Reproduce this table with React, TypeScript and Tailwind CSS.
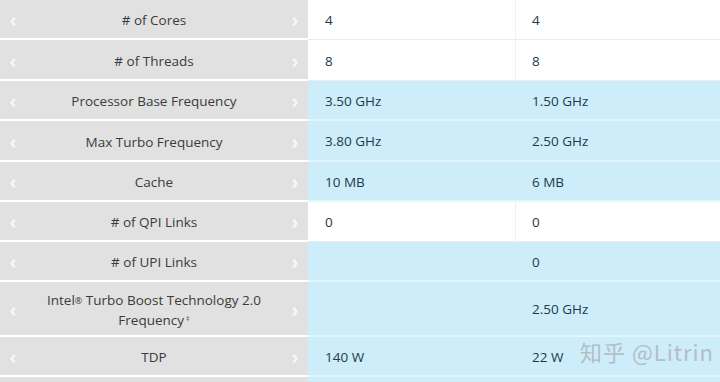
import React from "react";

type Row = { label: React.ReactNode; a: string; b: string; blue: boolean; h: number; arrows?: boolean };

const rows: Row[] = [
  { label: "# of Cores", a: "4", b: "4", blue: false, h: 40 },
  { label: "# of Threads", a: "8", b: "8", blue: false, h: 41 },
  { label: "Processor Base Frequency", a: "3.50 GHz", b: "1.50 GHz", blue: true, h: 40 },
  { label: "Max Turbo Frequency", a: "3.80 GHz", b: "2.50 GHz", blue: true, h: 41 },
  { label: "Cache", a: "10 MB", b: "6 MB", blue: true, h: 40 },
  { label: "# of QPI Links", a: "0", b: "0", blue: false, h: 40 },
  { label: "# of UPI Links", a: "", b: "0", blue: true, h: 40 },
  {
    label: (
      <>
        Intel<sup className="text-[9px] relative -top-[1px]">®</sup> Turbo Boost Technology 2.0
        <br />
        Frequency<sup className="text-[7px] relative -top-[4px] ml-[2px]">‡</sup>
      </>
    ),
    a: "",
    b: "2.50 GHz",
    blue: true,
    h: 55,
  },
  { label: "TDP", a: "140 W", b: "22 W", blue: true, h: 40 },
  { label: "", a: "", b: "", blue: true, h: 20, arrows: false },
];

export default function App() {
  return (
    <div
      className="relative w-[720px] h-[382px] overflow-hidden bg-white"
      style={{ fontFamily: '"Open Sans", "Noto Sans", sans-serif' }}
    >
      <div className="flex flex-col">
        {rows.map((r, i) => (
          <div key={i} className="flex" style={{ height: r.h }}>
            <div className="w-[308px] flex items-center bg-[#e1e1e1] border-b-2 border-white text-[#3b3b3b] text-[13.5px] leading-[20.5px] pt-[3px]">
              <span className="w-[26px] text-center text-[#f7f7f7] text-[19px] font-bold">
                {r.arrows === false ? "" : "‹"}
              </span>
              <span className="flex-1 text-center">{r.label}</span>
              <span className="w-[26px] text-center text-[#f7f7f7] text-[19px] font-bold">
                {r.arrows === false ? "" : "›"}
              </span>
            </div>
            <div
              className={
                "w-[208px] flex items-center pl-[17px] pt-[2px] text-[13.5px] text-[#23394b] " +
                (r.blue
                  ? "bg-[#cdedfa] border-b-2 border-[#e3f5fd]"
                  : "bg-white border-b border-[#ececec] border-r border-r-[#f0f0f0]")
              }
            >
              {r.a}
            </div>
            <div
              className={
                "flex-1 flex items-center pl-[16px] pt-[2px] text-[13.5px] text-[#23394b] " +
                (r.blue ? "bg-[#cdedfa] border-b-2 border-[#e3f5fd]" : "bg-white border-b border-[#ececec]")
              }
            >
              {r.b}
            </div>
          </div>
        ))}
      </div>
      <div
        className="absolute left-[580px] top-[335px] text-[22px] text-[#b3bec6] tracking-[1px]"
        style={{ fontFamily: '"Noto Sans CJK SC", "Noto Sans", sans-serif' }}
      >
        知乎 @Litrin
      </div>
    </div>
  );
}
